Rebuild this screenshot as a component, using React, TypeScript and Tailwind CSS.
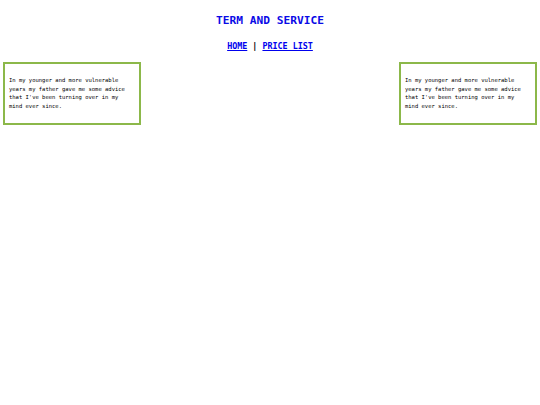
export default function App() {
  const text =
    "In my younger and more vulnerable years my father gave me some advice that I've been turning over in my mind ever since.";
  const box = (
    <div className="w-[138px] h-[63px] border-2 border-[#8cb84a] bg-white pl-[4px] pr-[10px] pt-[12px]">
      <p className="text-[5.5px] leading-[8.5px] text-black">{text}</p>
    </div>
  );
  return (
    <div className="w-[540px] h-[405px] bg-white" style={{ fontFamily: '"DejaVu Sans Mono", monospace' }}>
      <h1 className="pt-[14px] text-center text-[11.2px] leading-[14px] font-bold text-[#0a0ae6]">
        TERM AND SERVICE
      </h1>
      <nav className="mt-[13px] text-center text-[8.4px] leading-[10px] font-bold text-black">
        <a href="#" className="underline text-[#0000ee]">HOME</a>
        <span> | </span>
        <a href="#" className="underline text-[#0000ee]">PRICE LIST</a>
      </nav>
      <div className="mt-[11px] flex justify-between px-[3px]">
        {box}
        {box}
      </div>
    </div>
  );
}
